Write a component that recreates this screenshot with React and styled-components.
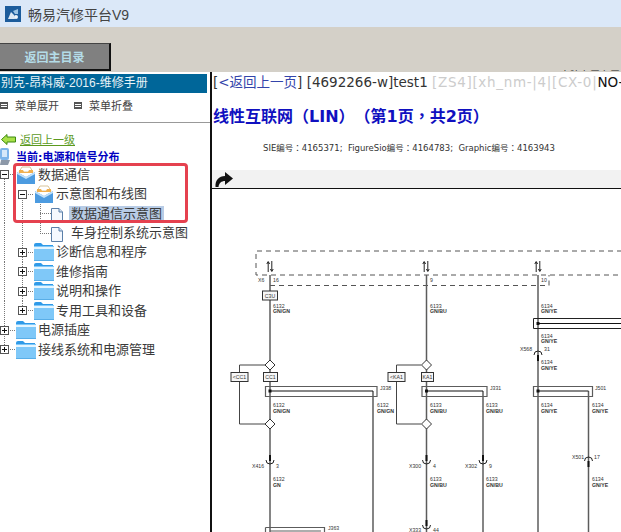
import React from "react";
import styled, { createGlobalStyle } from "styled-components";

const cjk = `"DejaVu Sans", "Noto Sans CJK SC", sans-serif`;
const cjkTc = `"DejaVu Sans", "Noto Sans CJK TC", sans-serif`;

const GlobalStyle = createGlobalStyle`
  html, body {
    margin: 0;
    padding: 0;
    background: #fff;
    font-family: ${cjk};
  }
`;

const Page = styled.div`
  width: 621px;
  height: 532px;
  overflow: hidden;
  display: flex;
  flex-direction: column;
`;

const TitleBar = styled.div`
  height: 27px;
  flex: none;
  background: #dbe8f8;
  display: flex;
  align-items: center;
  padding-left: 5px;
  gap: 7px;
  font-family: "Liberation Sans", "Noto Sans CJK SC", sans-serif;
  font-size: 14px;
  color: #444;
`;

const Band = styled.div`
  height: 45px;
  flex: none;
  background: #d4d0c8;
  display: flex;
  justify-content: space-between;
  align-items: flex-end;
  padding-bottom: 1px;
  box-sizing: border-box;
`;

const HomeButton = styled.button`
  width: 111px;
  height: 28px;
  padding: 0;
  background: #808080;
  border: none;
  border-top: 1px solid #444;
  border-right: 2px solid #111;
  border-bottom: 2px solid #111;
  color: #b4dce8;
  font: bold 12px "Noto Sans CJK SC", sans-serif;
`;

const PeekNote = styled.div`
  height: 2px;
  overflow: hidden;
  margin-right: 1px;
  font-size: 10px;
  line-height: 14px;
  color: #222;
`;

const Body = styled.div`
  flex: 1;
  min-height: 0;
  display: flex;
`;

const Side = styled.aside`
  width: 212px;
  flex: none;
  box-sizing: border-box;
  padding-top: 2px;
  border-right: 2px solid #111;
`;

const ManualTitle = styled.div`
  height: 19px;
  width: 207px;
  background: #006699;
  color: #e8f2f6;
  font-family: "Liberation Sans", "Noto Sans CJK SC", sans-serif;
  font-size: 12px;
  line-height: 19px;
  padding-left: 1px;
  box-sizing: border-box;
  white-space: nowrap;
  overflow: hidden;
`;

const MenuRow = styled.div`
  height: 30px;
  display: flex;
  align-items: center;
  border-bottom: 1px solid #999;
  font-size: 11px;
  color: #444;
  box-sizing: border-box;
  padding-bottom: 5px;
`;

const MenuAction = styled.span`
  display: flex;
  align-items: center;
  gap: 7px;
  margin-right: 15px;
`;

const MenuIcon = styled.i`
  width: 8px;
  height: 7px;
  box-sizing: border-box;
  border: 1px solid #555;
  background: repeating-linear-gradient(to bottom, #555 0 1px, #fff 1px 2px);
`;

const BackRow = styled.div`
  display: flex;
  align-items: center;
  gap: 4px;
  height: 16px;
  margin: 8px 0 0 1px;
`;

const BackLink = styled.a`
  color: #5c9a1e;
  font-size: 11px;
  text-decoration: underline;
`;

const CurrentRow = styled.div`
  display: flex;
  align-items: center;
  gap: 6px;
  height: 18px;
  color: #0000c0;
  font-size: 11px;
  font-weight: bold;
`;

const Tree = styled.div`
  position: relative;
`;

const Callout = styled.div`
  position: absolute;
  left: 13px;
  top: -2px;
  width: 175px;
  height: 60px;
  box-sizing: border-box;
  border: 3px solid #e5414f;
  border-radius: 4px;
  pointer-events: none;
`;

const TreeRow = styled.div`
  height: 19.45px;
  display: flex;
  align-items: center;
`;

const dotV = `repeating-linear-gradient(to bottom, #777 0 1px, transparent 1px 2px)`;
const dotH = `repeating-linear-gradient(to right, #777 0 1px, transparent 1px 2px)`;

const Indent = styled.span`
  width: 18px;
  height: 100%;
  flex: none;
  background-image: ${(p) => (p.$line ? dotV : "none")};
  background-size: 1px 100%;
  background-position: 4px 0;
  background-repeat: no-repeat;
`;

const Branch = styled.span`
  width: ${(p) => p.$width}px;
  height: 100%;
  flex: none;
  display: flex;
  align-items: center;
  background-image: ${dotV}, ${dotV}, ${dotH};
  background-repeat: no-repeat;
  background-size: 1px ${(p) => (p.$up ? "50%" : "0")}, 1px ${(p) => (p.$down ? "50%" : "0")}, 100% 1px;
  background-position: 4px 0, 4px 100%, 4px 50%;
`;

const Toggle = styled.span`
  position: relative;
  width: 9px;
  height: 9px;
  box-sizing: border-box;
  border: 1px solid #555;
  background: #fff;
  &::before {
    content: "";
    position: absolute;
    left: 1px;
    right: 1px;
    top: 3px;
    height: 1px;
    background: #111;
  }
  &::after {
    content: "";
    display: ${(p) => (p.$open ? "none" : "block")};
    position: absolute;
    top: 1px;
    bottom: 1px;
    left: 3px;
    width: 1px;
    background: #111;
  }
`;

const NodeText = styled.span`
  margin-left: ${(p) => p.$gap}px;
  padding: 0 2px;
  font-size: 13px;
  line-height: 16px;
  color: #3a3a3a;
  white-space: nowrap;
  background: ${(p) => (p.$selected ? "#b8cce6" : "transparent")};
`;

const Main = styled.main`
  flex: 1;
  min-width: 0;
  display: flex;
  flex-direction: column;
`;

const NavLine = styled.div`
  height: 18px;
  margin-top: 1px;
  padding-left: 1px;
  font-size: 13.5px;
  line-height: 18px;
  white-space: nowrap;
  overflow: hidden;
  color: #333;
`;

const BackText = styled.span`
  color: #3344aa;
`;

const GhostCodes = styled.span`
  color: #ccc;
  letter-spacing: 0.68px;
`;

const StateCode = styled.span`
  color: #111;
`;

const Heading = styled.h1`
  margin: 13px 0 0;
  padding-left: 1px;
  height: 26px;
  font-family: ${cjkTc};
  font-size: 16px;
  line-height: 26px;
  font-weight: bold;
  color: #1010c0;
  white-space: nowrap;
  text-spacing-trim: space-all;
`;

const Ids = styled.div`
  margin-top: 11px;
  height: 14px;
  padding-left: 51px;
  font-family: ${cjkTc};
  font-size: 8.5px;
  line-height: 14px;
  color: #333;
  white-space: pre;
  text-spacing-trim: space-all;
`;

const Toolbar = styled.div`
  margin-top: 15px;
  height: 18px;
  flex: none;
  background: #f2f2f2;
  border-bottom: 1px solid #111;
  padding-left: 3px;
  display: flex;
  align-items: center;
`;

const Diagram = styled.svg`
  display: block;
  flex: 1;
  min-height: 0;
  width: 100%;
`;

const Tiny = styled.text`
  font-family: "Liberation Sans", sans-serif;
  font-size: 5.2px;
  font-weight: ${(p) => (p.$bold ? 700 : 400)};
  fill: #333;
`;

const BoxLabel = styled.rect`
  fill: #f6f6f6;
  stroke: #333;
  stroke-width: 1;
`;

const Wire = styled.path`
  fill: none;
  stroke: ${(p) => p.$color || "#5c5c5c"};
  stroke-width: ${(p) => p.$w || 1.5};
`;

const Dashed = styled.path`
  fill: none;
  stroke: #555;
  stroke-width: 1;
  stroke-dasharray: 5 4;
`;

function AppLogo() {
  return (
    <svg width="16" height="16" viewBox="0 0 16 16">
      <rect width="16" height="16" fill="#1c5c9c" />
      <path d="M3 13 L6 6 L9 9 L10 13 Z" fill="#dce8f4" />
      <path d="M8 5 L13 3 L13 8 L10 8 Z" fill="#9cc4e4" />
      <circle cx="11" cy="11" r="2" fill="#eef4fa" />
    </svg>
  );
}

function BackArrow() {
  return (
    <svg width="15" height="11" viewBox="0 0 15 11">
      <path d="M0.5 5.5 L6 0.5 V3 H14.5 V8 H6 V10.5 Z" fill="#a8e048" stroke="#3c8a10" />
    </svg>
  );
}

function PcIcon() {
  return (
    <svg width="10" height="17" viewBox="0 0 10 17">
      <rect x="0" y="0" width="9" height="12" rx="2" fill="#7db4ea" />
      <rect x="2" y="2" width="5" height="7" fill="#d6e8fa" />
      <path d="M1 12 H10 L8 17 H0 Z" fill="#8c98a8" />
    </svg>
  );
}

function FolderIcon({ open }) {
  return (
    <svg width="20" height="20" viewBox="0 0 20 20" style={{ flex: "none" }}>
      {open ? (
        <>
          <path d="M6 2 H14 L17 7 H3 Z" fill="#fff" stroke="#d8c49a" />
          <path d="M3 5 H7 L8 7 H12 L13 5 H17 V8 H3 Z" fill="#f0b050" />
          <path d="M1 7 L10 12 L19 7 V19 H1 Z" fill="#4c9be0" />
          <path d="M1 7 L10 12 L19 7 L19 9 L10 14 L1 9 Z" fill="#bfe0fa" />
        </>
      ) : (
        <>
          <path d="M0 3 Q0 1 2 1 H7 L9 3 H19 V6 H0 Z" fill="#2f9ae8" />
          <rect x="0" y="4" width="20" height="15" fill="#7fc8f8" />
          <rect x="0" y="5" width="20" height="2" fill="#e4f5ff" />
          <rect x="0" y="18" width="20" height="1" fill="#58aee8" />
        </>
      )}
    </svg>
  );
}

function DocIcon() {
  return (
    <svg width="12" height="15" viewBox="0 0 12 15" style={{ flex: "none", marginTop: 3 }}>
      <path d="M0.5 0.5 H8 L11.5 4 V14.5 H0.5 Z" fill="#f4f8fe" stroke="#5b7fa8" />
      <path d="M8 0.5 V4 H11.5" fill="#cfe0f2" stroke="#5b7fa8" />
    </svg>
  );
}

function TurnArrow() {
  return (
    <svg width="18" height="15" viewBox="0 0 18 15">
      <path d="M0.5 15 C0 8 4 4 10 4 V0 L18 6.5 L10 13 V9 C6.5 9 4 11 3.5 15 Z" fill="#111" />
    </svg>
  );
}

const treeRows = [
  { id: 1, indents: [], branch: 16, up: false, down: true, toggle: "open", icon: "open", text: "数据通信" },
  { id: 2, indents: [true], branch: 16, up: false, down: true, toggle: "open", icon: "open", text: "示意图和布线图" },
  { id: 3, indents: [true, true], branch: 15, up: true, down: true, icon: "doc", text: "数据通信示意图", selected: true },
  { id: 4, indents: [true, true], branch: 15, up: true, down: false, icon: "doc", text: "车身控制系统示意图" },
  { id: 5, indents: [true], branch: 16, up: true, down: true, toggle: "closed", icon: "folder", text: "诊断信息和程序" },
  { id: 6, indents: [true], branch: 16, up: true, down: true, toggle: "closed", icon: "folder", text: "维修指南" },
  { id: 7, indents: [true], branch: 16, up: true, down: true, toggle: "closed", icon: "folder", text: "说明和操作" },
  { id: 8, indents: [true], branch: 16, up: true, down: false, toggle: "closed", icon: "folder", text: "专用工具和设备" },
  { id: 9, indents: [], branch: 16, up: true, down: true, toggle: "closed", icon: "folder", text: "电源插座" },
  { id: 10, indents: [], branch: 16, up: true, down: false, toggle: "closed", icon: "folder", text: "接线系统和电源管理" },
];

function TreeNode({ row }) {
  const isDoc = row.icon === "doc";
  return (
    <TreeRow>
      {row.indents.map((line, i) => (
        <Indent key={i} $line={line} />
      ))}
      <Branch $width={row.branch} $up={row.up} $down={row.down}>
        {row.toggle && <Toggle $open={row.toggle === "open"} />}
      </Branch>
      {isDoc ? <DocIcon /> : <FolderIcon open={row.icon === "open"} />}
      <NodeText $gap={isDoc ? 6 : 0} $selected={row.selected}>
        {row.text}
      </NodeText>
    </TreeRow>
  );
}

function WireLabel({ x, y, code, color }) {
  return (
    <>
      <Tiny x={x} y={y}>{code}</Tiny>
      <Tiny x={x} y={y + 5.5} $bold>{color}</Tiny>
    </>
  );
}

function Diamond({ x, y }) {
  return <path d={`M${x - 5} ${y} L${x} ${y - 5} L${x + 5} ${y} L${x} ${y + 5} Z`} fill="#fff" stroke="#333" />;
}

function Plug({ x, y, flip }) {
  if (flip) {
    return (
      <>
        <Wire d={`M${x - 4} ${y} A4 4 0 0 1 ${x + 4} ${y}`} $color="#222" $w={1} />
        <Wire d={`M${x} ${y} V${y + 6}`} $color="#111" $w={2} />
      </>
    );
  }
  return (
    <>
      <Wire d={`M${x - 4} ${y} A4 4 0 0 0 ${x + 4} ${y}`} $color="#222" $w={1} />
      <Wire d={`M${x} ${y - 5} V${y + 1}`} $color="#111" $w={2} />
    </>
  );
}

function Updown({ x }) {
  return (
    <path
      d={`M${x - 1.8} 272 V262 M${x - 3.2} 264 L${x - 1.8} 261.5 L${x - 0.4} 264 M${x + 1.8} 261 V271 M${x + 0.4} 269 L${x + 1.8} 271.5 L${x + 3.2} 269`}
      fill="none"
      stroke="#222"
      strokeWidth="1"
    />
  );
}

function Tag({ x, w, text }) {
  return (
    <>
      <BoxLabel x={x} y={372.5} width={w} height={9} />
      <Tiny x={x + w / 2} y={379} textAnchor="middle">{text}</Tiny>
    </>
  );
}

function WiringDiagram() {
  return (
    <Diagram viewBox="212 189 409 343" preserveAspectRatio="xMinYMin meet">
      <Dashed d="M640 251 H256 V275 H640" />
      <Dashed d="M270 285.5 H549 V275" />
      <Updown x={270} />
      <Updown x={426} />
      <Updown x={538} />

      {/* first branch */}
      <Wire d="M270 275 V532" />
      <Wire d="M265 365 H239.5 V372 M239.5 381 V424 H265" $color="#444" $w={1} />
      <Wire d="M373 391 V532" $color="#333" $w={1.2} />
      <Wire d="M270 391 H373" $color="#111" $w={1.2} />
      <Wire d="M265.5 386.5 H377 V396.5 H265.5 Z" $w={1.2} />
      <Wire d="M265.5 527.5 H324.5 V532 M265.5 527.5 V532 M270 531 H321" $w={1.2} />
      <rect x="268.5" y="389.5" width="3" height="3" fill="#111" />
      <BoxLabel x={262.5} y={291} width={15} height={9} />
      <Tiny x={270} y={297.5} textAnchor="middle">C3U</Tiny>
      <Diamond x={270} y={365} />
      <Diamond x={270} y={424} />
      <Tag x={231} w={17} text="<CC1" />
      <Tag x={263.5} w={14} text="CC1" />
      <Plug x={270} y={460} />

      {/* second branch */}
      <Wire d="M426.5 275 V532" />
      <Wire d="M421 365 H396.5 V372 M396.5 381 V424 H421" $color="#444" $w={1} />
      <Wire d="M483 391 V532" />
      <Wire d="M426.5 391 H483" $color="#111" $w={1.2} />
      <Wire d="M422 386.5 H487 V396.5 H422 Z" $w={1.2} />
      <rect x="425" y="389.5" width="3" height="3" fill="#111" />
      <Diamond x={426.5} y={365} />
      <Diamond x={426.5} y={424} />
      <Tag x={388} w={17} text="<KA1" />
      <Tag x={421.5} w={12} text="KA1" />
      <Plug x={426.5} y={460} />
      <Plug x={483} y={460} />
      <Plug x={426.5} y={525} />

      {/* third branch */}
      <Wire d="M538 275 V532" />
      <Wire d="M588.5 391 V532" />
      <Wire d="M640 318.5 H533.5 V328.5 H640" $color="#222" $w={1} />
      <Wire d="M538 323.5 H640" $color="#111" $w={1.2} />
      <Wire d="M538 391 H588.5" $color="#111" $w={1.2} />
      <Wire d="M533.5 386.5 H592.5 V396.5 H533.5 Z" $w={1.2} />
      <rect x="536.5" y="389.5" width="3" height="3" fill="#111" />
      <rect x="536.5" y="322" width="3" height="3" fill="#111" />
      <Plug x={538} y={355} flip />
      <Plug x={588.5} y={461} flip />

      <Tiny x={258} y={282}>X6</Tiny>
      <Tiny x={273} y={282}>16</Tiny>
      <Tiny x={430} y={282}>9</Tiny>
      <Tiny x={541} y={282}>10</Tiny>

      <WireLabel x={273} y={307.5} code="6132" color="GN/GN" />
      <WireLabel x={273} y={407} code="6132" color="GN/GN" />
      <WireLabel x={377} y={407} code="6132" color="GN/GN" />
      <WireLabel x={273} y={481} code="6132" color="GN" />
      <WireLabel x={430} y={307.5} code="6133" color="GN/BU" />
      <WireLabel x={430} y={407} code="6133" color="GN/BU" />
      <WireLabel x={486} y={407} code="6133" color="GN/BU" />
      <WireLabel x={430} y={481} code="6133" color="GN/BU" />
      <WireLabel x={486} y={481} code="6133" color="GN/BU" />
      <WireLabel x={541} y={307.5} code="6134" color="GN/YE" />
      <WireLabel x={541} y={337.5} code="6134" color="GN/YE" />
      <WireLabel x={541} y={364} code="6134" color="GN/YE" />
      <WireLabel x={541} y={407} code="6134" color="GN/YE" />
      <WireLabel x={592} y={407} code="6134" color="GN/YE" />
      <WireLabel x={592} y={481} code="6134" color="GN/YE" />

      <Tiny x={380} y={390}>J338</Tiny>
      <Tiny x={490} y={390}>J331</Tiny>
      <Tiny x={595} y={390}>J501</Tiny>
      <Tiny x={328} y={530}>J363</Tiny>

      <Tiny x={252} y={468}>X416</Tiny>
      <Tiny x={276} y={468}>3</Tiny>
      <Tiny x={409} y={468}>X300</Tiny>
      <Tiny x={433} y={468}>4</Tiny>
      <Tiny x={465} y={468}>X302</Tiny>
      <Tiny x={489} y={468}>9</Tiny>
      <Tiny x={572} y={459}>X501</Tiny>
      <Tiny x={594} y={459}>17</Tiny>
      <Tiny x={520} y={351}>X568</Tiny>
      <Tiny x={544} y={351}>31</Tiny>
      <Tiny x={409} y={532}>X333</Tiny>
      <Tiny x={433} y={532}>44</Tiny>
    </Diagram>
  );
}

export default function App() {
  return (
    <Page>
      <GlobalStyle />
      <TitleBar>
        <AppLogo />
        畅易汽修平台V9
      </TitleBar>
      <Band>
        <HomeButton>返回主目录</HomeButton>
        <PeekNote>电脑布置布置</PeekNote>
      </Band>
      <Body>
        <Side>
          <ManualTitle>别克-昂科威-2016-维修手册</ManualTitle>
          <MenuRow>
            <MenuAction><MenuIcon />菜单展开</MenuAction>
            <MenuAction><MenuIcon />菜单折叠</MenuAction>
          </MenuRow>
          <BackRow>
            <BackArrow />
            <BackLink>返回上一级</BackLink>
          </BackRow>
          <CurrentRow>
            <PcIcon />
            当前:电源和信号分布
          </CurrentRow>
          <Tree>
            {treeRows.map((row) => (
              <TreeNode key={row.id} row={row} />
            ))}
            <Callout />
          </Tree>
        </Side>
        <Main>
          <NavLine>
            [<BackText>&lt;返回上一页</BackText>] [4692266-w]test1{" "}
            <GhostCodes>[ZS4][xh_nm-|4|[CX-0|</GhostCodes>
            <StateCode>NO-</StateCode>
          </NavLine>
          <Heading>线性互联网（LIN）（第1页，共2页）</Heading>
          <Ids>SIE编号：4165371;  FigureSio编号：4164783;  Graphic编号：4163943</Ids>
          <Toolbar>
            <TurnArrow />
          </Toolbar>
          <WiringDiagram />
        </Main>
      </Body>
    </Page>
  );
}
